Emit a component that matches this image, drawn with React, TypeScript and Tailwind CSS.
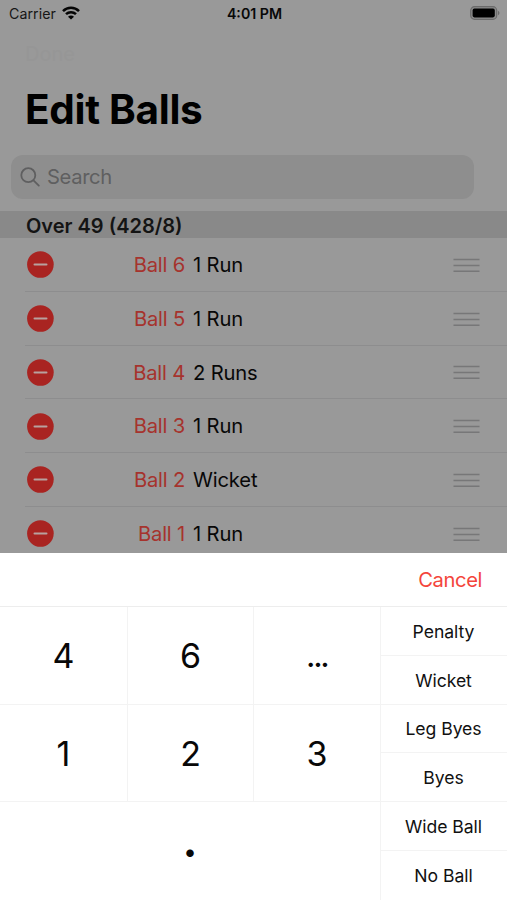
interface Ball {
  label: string;
  result: string;
}

const balls: Ball[] = [
  { label: 'Ball 6', result: '1 Run' },
  { label: 'Ball 5', result: '1 Run' },
  { label: 'Ball 4', result: '2 Runs' },
  { label: 'Ball 3', result: '1 Run' },
  { label: 'Ball 2', result: 'Wicket' },
  { label: 'Ball 1', result: '1 Run' },
];

const extras = ['Penalty', 'Wicket', 'Leg Byes', 'Byes', 'Wide Ball', 'No Ball'];

function StatusBar() {
  return (
    <div className="grid h-7 shrink-0 grid-cols-3 items-center pr-[7px] pl-[9px] text-[14.2px]">
      <div className="flex items-center gap-[6px] text-[#161616]">
        <span className="tracking-[0.05px]">Carrier</span>
        <svg className="-mt-0.5 h-[14px] w-[18px]" viewBox="0 0 18 14" fill="none" stroke="#050505" strokeWidth="2.5">
          <path d="M1 5.1C5.5 0.6 12.5 0.6 17 5.1" />
          <path d="M4 8.2C6.8 5.5 11.2 5.5 14 8.2" />
          <path d="M9 13.6 L6 10.7C7.8 9.1 10.2 9.1 12 10.7Z" fill="#050505" stroke="none" />
        </svg>
      </div>
      <span className="text-center font-semibold text-[#080808]">4:01 PM</span>
      <svg className="-mt-0.5 h-[14px] w-[30px] justify-self-end" viewBox="0 0 30 14">
        <rect x="0.7" y="0.7" width="26" height="12.6" rx="3.8" fill="#8b8b8b" stroke="#6b6b6b" strokeWidth="1.2" />
        <rect x="2.6" y="2.6" width="22.2" height="8.8" rx="1.8" fill="#000" />
        <path d="M28 4.8C30 5.6 30 8.4 28 9.2Z" fill="#6b6b6b" />
      </svg>
    </div>
  );
}

function SearchField() {
  return (
    <div className="mr-[33px] ml-[11px] flex h-11 shrink-0 items-center rounded-xl bg-[#8e8e8e] pl-[9px] text-[#5f5f60]">
      <svg className="h-5 w-5" viewBox="0 0 20 20" fill="none" stroke="currentColor" strokeWidth="1.8" strokeLinecap="round">
        <circle cx="8.3" cy="8.2" r="7" />
        <path d="M13.5 13.4 L18.8 18.6" />
      </svg>
      <span className="pt-px pl-[7px] text-[20.2px] tracking-[-0.35px]">Search</span>
    </div>
  );
}

function BallRow({ ball }: { ball: Ball }) {
  return (
    <div className="flex h-[53.75px] shrink-0 pl-[27px]">
      <svg className="h-[27px] w-[27px] self-center" viewBox="0 0 27 27">
        <circle cx="13.4" cy="13.5" r="13.3" fill="#a92421" />
        <path d="M7.5 13.5H19.5" stroke="#b8a19f" strokeWidth="2" strokeLinecap="round" />
      </svg>
      <div className="-ml-[29px] flex flex-1 items-center border-b border-[#8d8d8e] pt-0.5 text-[20.2px]">
        <span className="w-[160px] text-right tracking-[-0.2px] text-[#a6332d]">{ball.label}</span>
        <span className="flex-1 pl-2 tracking-[-0.15px] text-[#080808]">{ball.result}</span>
        <svg className="mr-[27px] h-[15px] w-[27px]" viewBox="0 0 27 15" stroke="#777778" strokeWidth="1.5">
          <path d="M0.5 1.5H26.5M0.5 7.5H26.5M0.5 13.3H26.5" />
        </svg>
      </div>
    </div>
  );
}

function Key({ label }: { label: string }) {
  return (
    <button className="flex items-center justify-center border-r border-b border-[#f3f3f3] text-[34px]">
      {label === '...' ? <span className="pt-0.5 text-[28px] font-semibold tracking-[-1.8px]">{label}</span> : label}
    </button>
  );
}

function Keypad() {
  return (
    <div className="flex h-[347px] shrink-0 flex-col bg-white text-[#080808]">
      <div className="flex h-[54px] items-center justify-end border-b border-[#ededed] pt-px pr-[25px]">
        <button className="text-[20.2px] tracking-[-0.4px] text-[#f4453b]">Cancel</button>
      </div>
      <div className="flex flex-1">
        <div className="grid w-[381px] grid-cols-[128px_126px_127px] grid-rows-[98px_97px_98px]">
          <Key label="4" />
          <Key label="6" />
          <Key label="..." />
          <Key label="1" />
          <Key label="2" />
          <Key label="3" />
          <button className="col-span-3 flex items-center justify-center border-r border-[#f3f3f3]">
            <span className="pt-0.5 text-[24px]">•</span>
          </button>
        </div>
        <div className="flex flex-1 flex-col">
          {extras.map((extra) => (
            <button
              key={extra}
              className="h-[48.8px] border-b border-[#f3f3f3] pt-0.5 pr-px text-[17.6px] tracking-[-0.05px] text-[#111] last:border-b-0"
            >
              {extra}
            </button>
          ))}
        </div>
      </div>
    </div>
  );
}

export default function App() {
  return (
    <div className="flex h-[900px] w-[507px] flex-col overflow-hidden bg-[#999] font-['Inter',sans-serif]">
      <div className="flex h-[553px] shrink-0 flex-col overflow-hidden">
        <StatusBar />
        <div className="h-[50px] shrink-0 pt-[14px] pl-[25px] text-[20px] leading-6 text-[#969696]">Done</div>
        <h1 className="h-[77px] shrink-0 pl-[25px] text-[40.5px] leading-[64px] font-bold tracking-[-0.3px] text-black">
          Edit Balls
        </h1>
        <SearchField />
        <h2 className="mt-3 h-[27px] shrink-0 bg-[#898989] pl-[26px] text-[20px] leading-[30px] font-semibold text-[#141414]">
          Over 49 (428/8)
        </h2>
        {balls.map((ball) => (
          <BallRow key={ball.label} ball={ball} />
        ))}
      </div>
      <Keypad />
    </div>
  );
}
